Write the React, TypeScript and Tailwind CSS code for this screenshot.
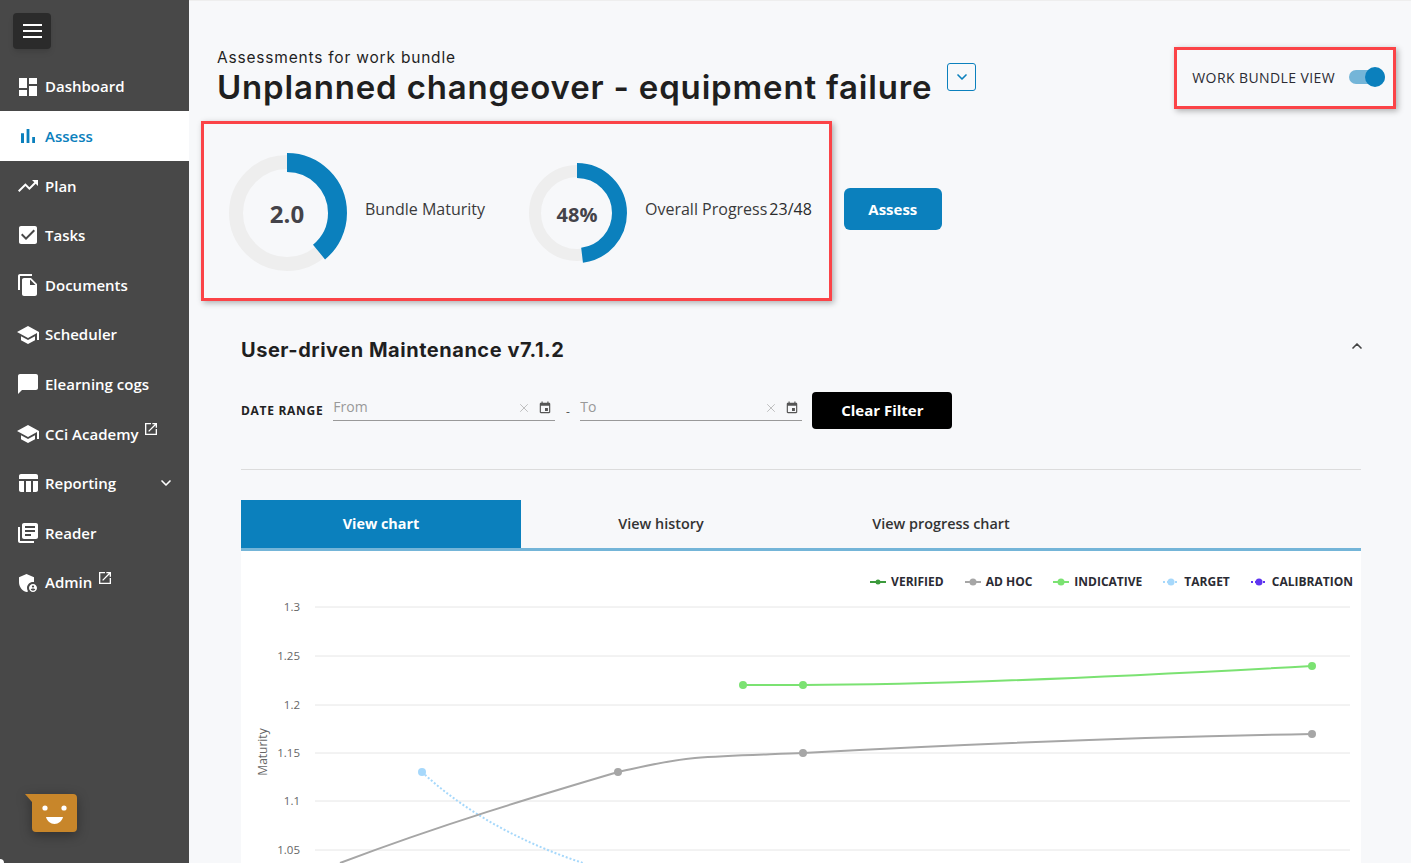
import { ChevronDown, ChevronUp, X } from "lucide-react";

const navItems = [
  { label: "Dashboard", d: "M3 13h8V3H3v10zm0 8h8v-6H3v6zm10 0h8V11h-8v10zm0-18v6h8V3h-8z" },
  { label: "Assess", d: "M5 9.2h3V19H5zM10.6 5h2.8v14h-2.8zm5.6 8H19v6h-2.8z", active: true },
  { label: "Plan", d: "M16 6l2.29 2.29-4.88 4.88-4-4L2 16.59 3.41 18l6-6 4 4 6.3-6.29L22 12V6z" },
  {
    label: "Tasks",
    d: "M19 3H5c-1.11 0-2 .9-2 2v14c0 1.1.89 2 2 2h14c1.11 0 2-.9 2-2V5c0-1.1-.89-2-2-2zm-9 14l-5-5 1.41-1.41L10 14.17l7.59-7.59L19 8l-9 9z",
  },
  {
    label: "Documents",
    d: "M16 1H4c-1.1 0-2 .9-2 2v14h2V3h12V1zm-1 4l6 6v10c0 1.1-.9 2-2 2H7.99C6.89 23 6 22.1 6 21l.01-14c0-1.1.89-2 1.99-2h7zm-1 7h5.5L14 6.5V12z",
  },
  { label: "Scheduler", d: "M5 13.18v4L12 21l7-3.82v-4L12 17l-7-3.82zM12 3L1 9l11 6 9-4.91V17h2V9L12 3z" },
  { label: "Elearning cogs", d: "M20 2H4c-1.1 0-2 .9-2 2v18l4-4h14c1.1 0 2-.9 2-2V4c0-1.1-.9-2-2-2z" },
  {
    label: "CCi Academy",
    d: "M5 13.18v4L12 21l7-3.82v-4L12 17l-7-3.82zM12 3L1 9l11 6 9-4.91V17h2V9L12 3z",
    external: true,
  },
  {
    label: "Reporting",
    d: "M10 10.02h5V21h-5zM17 21h3c1.1 0 2-.9 2-2v-9h-5v11zm3-18H5c-1.1 0-2 .9-2 2v3h19V5c0-1.1-.9-2-2-2zM3 19c0 1.1.9 2 2 2h3V10H3v9z",
    submenu: true,
  },
  {
    label: "Reader",
    d: "M4 6H2v14c0 1.1.9 2 2 2h14v-2H4V6zm16-4H8c-1.1 0-2 .9-2 2v12c0 1.1.9 2 2 2h12c1.1 0 2-.9 2-2V4c0-1.1-.9-2-2-2zm-1 9H9V9h10v2zm-4 4H9v-2h6v2zm4-8H9V5h10v2z",
  },
  {
    label: "Admin",
    d: "M17 11c.34 0 .67.04 1 .09V6.27L10.5 3 3 6.27v4.91c0 4.54 3.2 8.79 7.5 9.82.55-.13 1.08-.32 1.6-.55-.69-.98-1.1-2.17-1.1-3.45 0-3.31 2.69-6 6-6zM17 13c-2.21 0-4 1.79-4 4s1.79 4 4 4 4-1.79 4-4-1.79-4-4-4zm0 1.38c.62 0 1.12.51 1.12 1.12s-.51 1.12-1.12 1.12-1.12-.51-1.12-1.12.5-1.12 1.12-1.12zm0 5.37c-.93 0-1.74-.46-2.24-1.17.05-.72 1.51-1.08 2.24-1.08s2.19.36 2.24 1.08c-.5.71-1.31 1.17-2.24 1.17z",
    external: true,
  },
];

const legend = [
  { label: "VERIFIED", color: "#3c9a3c", dash: false, r: 2.5 },
  { label: "AD HOC", color: "#a6a6a6", dash: false, r: 3.5 },
  { label: "INDICATIVE", color: "#7be272", dash: false, r: 3.5 },
  { label: "TARGET", color: "#a6d8fb", dash: true, r: 3.5 },
  { label: "CALIBRATION", color: "#5f35f0", dash: true, r: 3.5 },
];

const gridLines = [
  { y: 607, label: "1.3" },
  { y: 656, label: "1.25" },
  { y: 705, label: "1.2" },
  { y: 753, label: "1.15" },
  { y: 801, label: "1.1" },
  { y: 850, label: "1.05" },
];

function ExternalIcon() {
  return (
    <svg viewBox="0 0 24 24" className="mb-[9px] ml-[5px] size-[16px] fill-white">
      <path d="M19 19H5V5h7V3H3v18h18v-9h-2v7zM14 3v2h3.59l-9.83 9.83 1.41 1.41L19 6.41V10h2V3h-7z" />
    </svg>
  );
}

function Donut({
  size,
  trackWidth,
  barWidth,
  percent,
  value,
  textClass,
}: {
  size: number;
  trackWidth: number;
  barWidth: number;
  percent: number;
  value: string;
  textClass: string;
}) {
  const c = size / 2;
  const trackR = c - 2 - trackWidth / 2;
  const barR = c - barWidth / 2;
  const circ = 2 * Math.PI * barR;
  return (
    <div className="relative shrink-0" style={{ width: size, height: size }}>
      <svg width={size} height={size} className="-rotate-90">
        <circle cx={c} cy={c} r={trackR} fill="none" stroke="#eeeeee" strokeWidth={trackWidth} />
        <circle
          cx={c}
          cy={c}
          r={barR}
          fill="none"
          stroke="#0b80bd"
          strokeWidth={barWidth}
          strokeDasharray={`${circ * percent} ${circ}`}
        />
      </svg>
      <div className={`absolute inset-0 flex items-center justify-center font-bold text-[#444349] ${textClass}`}>
        {value}
      </div>
    </div>
  );
}

function DateField({ placeholder }: { placeholder: string }) {
  return (
    <div className="flex h-[29px] w-[222px] items-start border-b border-[#999999] pt-[5px]">
      <span className="flex-1 text-[14px] leading-[20px] text-[#999999]">{placeholder}</span>
      <X className="mt-[4px] size-[14px] text-[#aaaaaa]" strokeWidth={1.25} />
      <svg viewBox="0 0 24 24" className="mt-[4px] mr-[3px] ml-[7px] size-[14px] fill-[#555555]">
        <path d="M17 12h-5v5h5v-5zM16 1v2H8V1H6v2H5c-1.11 0-1.99.9-1.99 2L3 19c0 1.1.89 2 2 2h14c1.1 0 2-.9 2-2V5c0-1.1-.9-2-2-2h-1V1h-2zm3 18H5V8h14v11z" />
      </svg>
    </div>
  );
}

function Chart() {
  return (
    <svg viewBox="241 595 1120 268" width={1120} height={268} className="block">
      {gridLines.map((g) => (
        <g key={g.y}>
          <line x1={315} x2={1350} y1={g.y} y2={g.y} stroke="#e6e6e6" strokeWidth={1} />
          <text
            x={300}
            y={g.y + 3.5}
            textAnchor="end"
            fontSize={11.5}
            fill="#666666"
            fontFamily="'Open Sans', sans-serif"
          >
            {g.label}
          </text>
        </g>
      ))}
      <text
        x={0}
        y={0}
        transform="translate(267 752) rotate(-90)"
        textAnchor="middle"
        fontSize={12}
        fill="#666666"
        fontFamily="'Open Sans', sans-serif"
      >
        Maturity
      </text>
      <path
        d="M422 772C468 815 528 845 583 863"
        fill="none"
        stroke="#a6d8fb"
        strokeWidth={2}
        strokeDasharray="2 2"
      />
      <circle cx={422} cy={772} r={4} fill="#a6d8fb" />
      <path
        d="M340 863C440 825 540 795 618 772C650 765 670 760 695 758C730 755 770 754.500 803 753C950 745 1150 737 1312 734"
        fill="none"
        stroke="#a6a6a6"
        strokeWidth={2}
      />
      <circle cx={618} cy={772} r={4} fill="#a6a6a6" />
      <circle cx={803} cy={753} r={4} fill="#a6a6a6" />
      <circle cx={1312} cy={734} r={4} fill="#a6a6a6" />
      <path d="M743 685L803 685C950 685 1150 675 1312 666" fill="none" stroke="#7be272" strokeWidth={2} />
      <circle cx={743} cy={685} r={4} fill="#7be272" />
      <circle cx={803} cy={685} r={4} fill="#7be272" />
      <circle cx={1312} cy={666} r={4} fill="#7be272" />
    </svg>
  );
}

export default function App() {
  return (
    <div className="flex h-[863px] w-[1411px] overflow-hidden bg-[#f7f8fa] font-['Open_Sans',sans-serif]">
      <aside className="relative h-full w-[189px] shrink-0 bg-[#484848]">
        <div className="px-[13px] pt-[13px]">
          <button className="flex h-[36px] w-[38px] flex-col items-center justify-center gap-[4px] rounded-[4px] bg-[#2b2b2b] shadow-md">
            <span className="h-[2px] w-[19px] bg-white" />
            <span className="h-[2px] w-[19px] bg-white" />
            <span className="h-[2px] w-[19px] bg-white" />
          </button>
        </div>
        <nav className="mt-[12.800px]">
          {navItems.map((item) => (
            <div
              key={item.label}
              className={`flex h-[49.6px] items-center pl-[16px] text-[15px] font-semibold ${
                item.active ? "bg-white font-bold text-[#0b80bd]" : "text-white"
              }`}
            >
              <svg
                viewBox="0 0 24 24"
                className={`mr-[5px] size-[24px] ${item.active ? "fill-[#0b80bd]" : "fill-white"}`}
              >
                <path d={item.d} />
              </svg>
              <span>{item.label}</span>
              {item.external && <ExternalIcon />}
              {item.submenu && <ChevronDown className="ml-auto mr-[15px] size-[16px]" strokeWidth={2.5} />}
            </div>
          ))}
        </nav>
        <div className="absolute top-[794px] left-[25px]">
          <svg width={52} height={38} viewBox="0 0 52 38" className="drop-shadow-[0_3px_6px_rgba(0,0,0,0.35)]">
            <path d="M0 0H48a4 4 0 0 1 4 4V34a4 4 0 0 1-4 4H11a4 4 0 0 1-4-4V8z" fill="#c8862a" />
            <circle cx={20} cy={14} r={2.6} fill="#fff" />
            <circle cx={39} cy={14} r={2.6} fill="#fff" />
            <path d="M21 23H38C37 27 33.500 30 29.500 30S22 27 21 23z" fill="#fff" />
          </svg>
        </div>
        <div className="absolute bottom-0 left-0 size-[4px] rounded-tr-full bg-white" />
      </aside>

      <main className="relative flex-1 border-t border-[#eeeeee] pt-[46px] pr-[50px] pl-[28px] text-[#1f1f1f]">
        <div className="absolute top-[120px] left-[12px] h-[180px] w-[631px] border-[3px] border-[#fb4347] shadow-[2px_2px_6px_rgba(0,0,0,0.3)]" />
        <div className="absolute top-[46px] left-[985px] h-[62px] w-[222px] border-[3px] border-[#fb4347] shadow-[2px_2px_6px_rgba(0,0,0,0.3)]" />

        <header className="flex items-start justify-between">
          <div>
            <p className="h-[20px] pt-[1px] font-['Inter',sans-serif] text-[15.500px] leading-[20px] tracking-[0.8px]">
              Assessments for work bundle
            </p>
            <div className="flex h-[40px] items-start">
              <h1 className="font-['Inter',sans-serif] text-[33px] leading-[40px] font-semibold tracking-[0.82px]">
                Unplanned changeover - equipment failure
              </h1>
              <button className="mt-[-4px] ml-[15px] flex h-[28px] w-[29px] items-center justify-center rounded-[3px] border border-[#0b80bd] text-[#0b80bd]">
                <ChevronDown className="size-[16px]" strokeWidth={2.5} />
              </button>
            </div>
          </div>
          <div className="mr-[-24px] flex h-[60px] items-center">
            <span className="text-[14px] tracking-[0.4px] text-[#2b2b33]">WORK BUNDLE VIEW</span>
            <div className="relative ml-[14px] h-[14px] w-[36px] rounded-full bg-[#74b5d8]">
              <div className="absolute top-[-3px] right-0 size-[20px] rounded-full bg-[#0b80bd]" />
            </div>
          </div>
        </header>

        <section className="mt-[46px] flex h-[120px] items-center pl-[10px]">
          <Donut size={120} trackWidth={14} barWidth={19} percent={0.39} value="2.0" textClass="pt-[2px] text-[24px]" />
          <span className="mb-[8px] ml-[18px] w-[162px] text-[16px] text-[#3a3a3a]">Bundle Maturity</span>
          <Donut size={100} trackWidth={12} barWidth={15} percent={0.48} value="48%" textClass="pt-[3px] text-[20px]" />
          <span className="mb-[8px] ml-[18px] text-[16px] text-[#3a3a3a]">Overall Progress</span>
          <span className="mb-[8px] ml-[2px] text-[16px] text-[#2b2b2b]">23/48</span>
          <button className="mb-[8px] ml-[32px] h-[42px] w-[98px] rounded-[6px] bg-[#0b80bd] text-[15px] font-bold text-white">
            Assess
          </button>
        </section>

        <section className="pl-[24px]">
          <div className="mt-[63px] flex h-[28px] items-center justify-between">
            <h2 className="font-['Inter',sans-serif] text-[20px] font-bold tracking-[0.53px] text-[#1f1f1f]">
              User-driven Maintenance v7.1.2
            </h2>
            <ChevronUp className="mr-[-4px] mb-[8px] size-[16px] text-[#444444]" strokeWidth={2.5} />
          </div>

          <div className="mt-[28px] flex h-[37px] items-start">
            <span className="mt-[10px] text-[12px] font-bold tracking-[0.7px] text-[#222222]">DATE RANGE</span>
            <div className="ml-[10px]">
              <DateField placeholder="From" />
            </div>
            <span className="mt-[11px] w-[25px] text-center text-[12px] text-[#555555]">-</span>
            <DateField placeholder="To" />
            <button className="ml-[10px] h-[37px] w-[140px] rounded-[4px] bg-black text-[15px] font-bold text-white">
              Clear Filter
            </button>
          </div>

          <div className="mt-[40px] h-px bg-[#dcdcdc]" />

          <div className="mt-[30px] flex h-[51px] border-b-[3px] border-[#74b5d8] text-[14.400px] font-semibold text-[#333333]">
            <div className="flex w-[280px] items-center justify-center bg-[#0b80bd] font-bold text-white">
              View chart
            </div>
            <div className="flex w-[280px] items-center justify-center">View history</div>
            <div className="flex w-[280px] items-center justify-center">View progress chart</div>
          </div>

          <div className="bg-white">
            <div className="flex h-[44px] items-start justify-end gap-[21px] pt-[23px] pr-[8px]">
              {legend.map((l) => (
                <div key={l.label} className="flex h-[16px] items-center gap-[5px]">
                  <svg width={16} height={8} viewBox="0 0 16 8">
                    <line
                      x1={0}
                      x2={16}
                      y1={4}
                      y2={4}
                      stroke={l.color}
                      strokeWidth={2}
                      strokeDasharray={l.dash ? "2 2" : undefined}
                    />
                    <circle cx={8} cy={4} r={l.r} fill={l.color} />
                  </svg>
                  <span className="text-[12px] leading-[16px] font-bold text-[#2b2b33]">{l.label}</span>
                </div>
              ))}
            </div>
            <Chart />
          </div>
        </section>
      </main>
    </div>
  );
}
